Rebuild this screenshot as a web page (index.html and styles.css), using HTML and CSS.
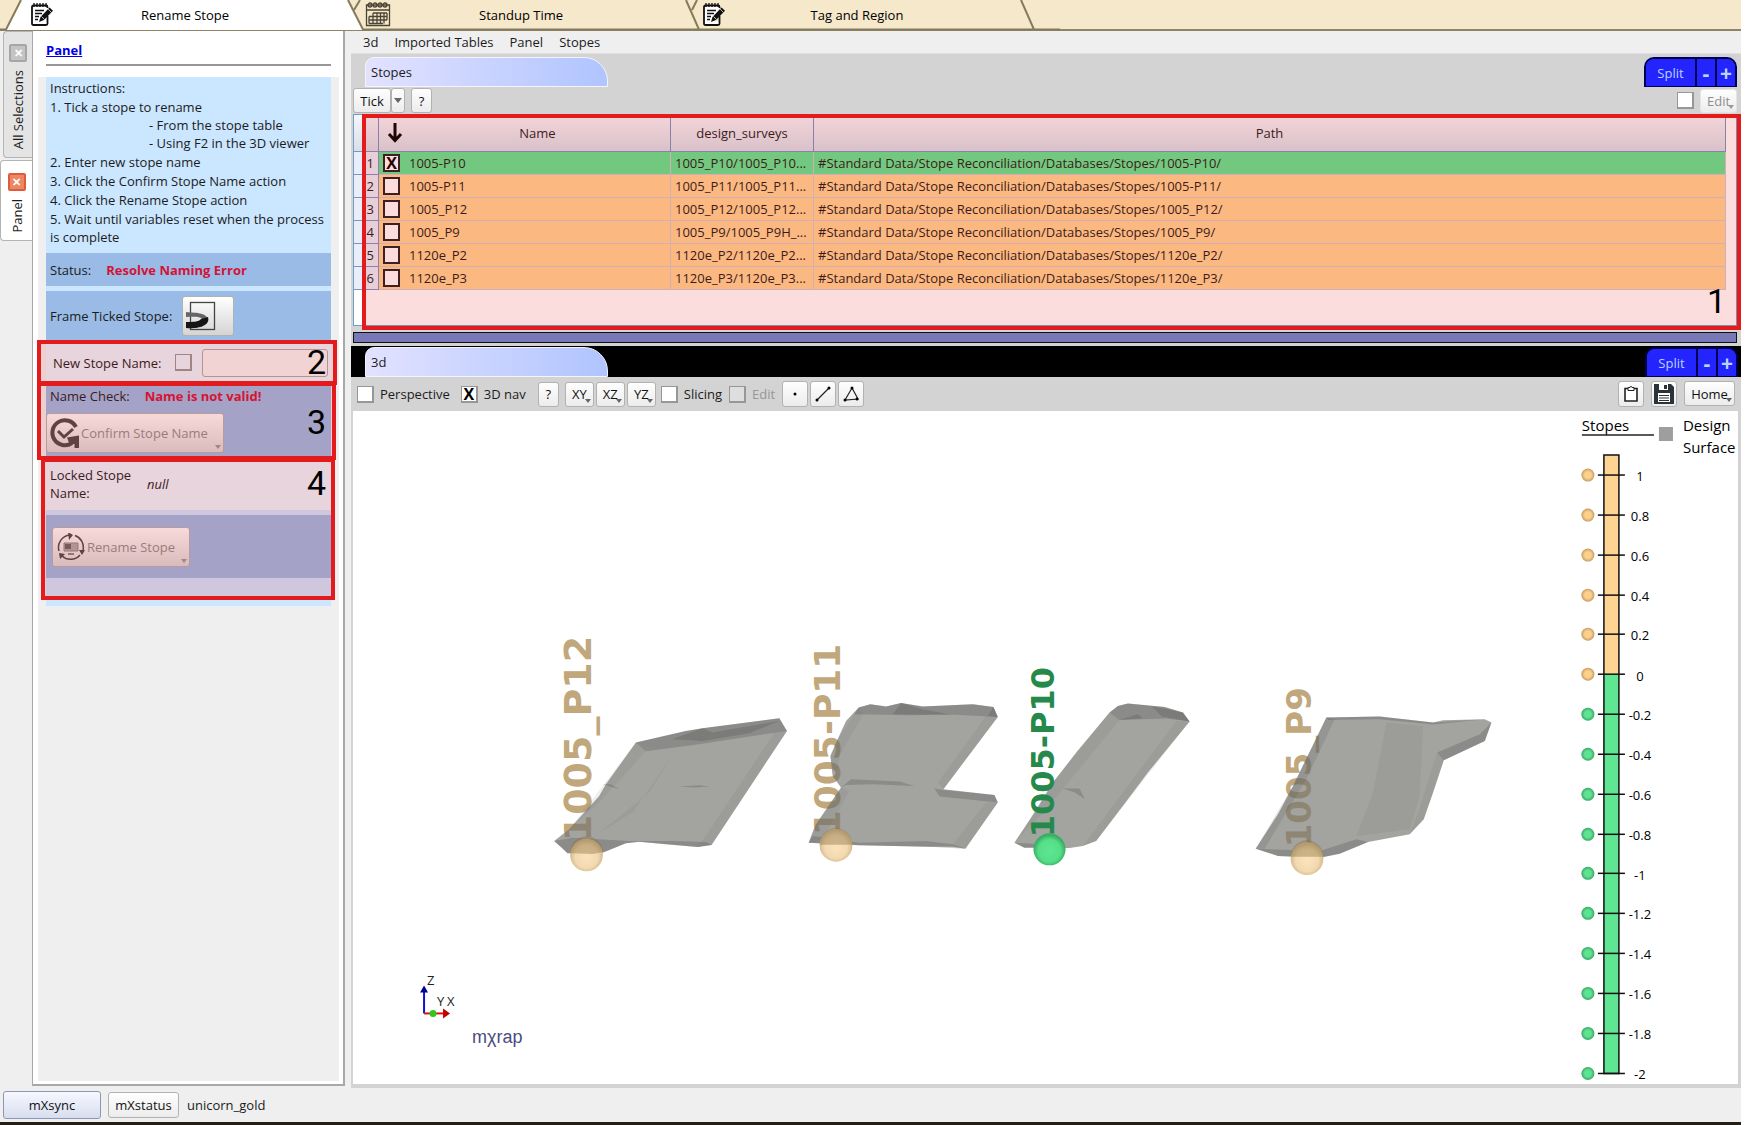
FILE: index.html
```html
<!DOCTYPE html>
<html lang="en">
<head>
<meta charset="utf-8">
<title>Rename Stope</title>
<link rel="stylesheet" href="styles.css">
</head>
<body>
<svg class="defs" aria-hidden="true">
  <defs>
    <symbol id="i-note" viewBox="0 0 26 26">
      <path d="M4 4h15v3l-4 5v8h4v4H3V4z" fill="#fff"/>
      <path d="M18.500 15v7.500q0 1.500-1.500 1.500H4.500Q3 24 3 22.500V6q0-1.500 1.500-1.500H17q1.500 0 1.500 1.500v1" fill="none" stroke="#111" stroke-width="1.800"/>
      <path d="M5 2v4M8 2v4M11 2v4M14 2v4M17 2v4" stroke="#111" stroke-width="1.300"/>
      <path d="M6 9.500h9M6 12.500h7M6 15.500h4M6 18.500h3" stroke="#111" stroke-width="1.300"/>
      <path d="M10 21l1.500-5L20.500 6.500l3.500 3.300L15 19z" fill="#111"/>
      <path d="M12.500 15.500l3 3M19 8l3.500 3.500" stroke="#fff" stroke-width=".7"/>
    </symbol>
    <symbol id="i-cal" viewBox="0 0 26 26">
      <g fill="none" stroke="#4a4536" stroke-width="1.300">
        <path d="M1.500 4h23v20.500h-23zM1.500 9h23"/>
        <path d="M8 12h14M4 15.500h18M4 19h18M4 22.500h14M4 15.500v7M8 12v10.500M12 12v10.500M15.500 12v10.500M19 12v10.500M22 12v7"/>
        <circle cx="5" cy="4" r="2"/><circle cx="10" cy="4" r="2"/><circle cx="15" cy="4" r="2"/><circle cx="20" cy="4" r="2"/>
      </g>
    </symbol>
    <radialGradient id="g-tan" cx=".5" cy=".55" r=".5"><stop offset="0" stop-color="#fbe3bd"/><stop offset=".7" stop-color="#f3d9b0"/><stop offset="1" stop-color="#d3b98e"/></radialGradient>
    <radialGradient id="g-green" cx=".5" cy=".55" r=".5"><stop offset="0" stop-color="#5ee591"/><stop offset=".7" stop-color="#55de88"/><stop offset="1" stop-color="#38ad63"/></radialGradient>
    <radialGradient id="g-dot-tan"><stop offset=".5" stop-color="#fdd08c"/><stop offset="1" stop-color="#c49d63"/></radialGradient>
    <radialGradient id="g-dot-green"><stop offset=".5" stop-color="#5fe291"/><stop offset="1" stop-color="#36a863"/></radialGradient>
    <g id="tick-tan"><circle cx="1588" cy="0" r="6.500" fill="url(#g-dot-tan)"/><path d="M1598 0h27" stroke="#111" stroke-width="1.500"/></g>
    <g id="tick-green"><circle cx="1588" cy="0" r="6.500" fill="url(#g-dot-green)"/><path d="M1598 0h27" stroke="#111" stroke-width="1.500"/></g>
  </defs>
</svg>
<div class="app">
  <nav class="suite-tabs">
    <svg class="suite-shape" width="1060" height="31" viewBox="0 0 1060 31" aria-hidden="true">
      <path d="M0 30L6 30 21 0H348L363 30z" fill="#fff"/>
      <g fill="none" stroke="#857a5c" stroke-width="2">
        <path d="M0 29.500H6L21 0M348 0L363 29.500H699L686 0M699 29.500H1034L1021 0M1034 29.500H1060"/>
        <path d="M360 0l-6 10M697 0l-5 10"/>
      </g>
    </svg>
    <a class="suite-tab" href="#rename"><svg class="suite-icon"><use href="#i-note"/></svg>Rename Stope</a>
    <a class="suite-tab" href="#standup"><svg class="suite-icon"><use href="#i-cal"/></svg>Standup Time</a>
    <a class="suite-tab" href="#tag"><svg class="suite-icon"><use href="#i-note"/></svg>Tag and Region</a>
  </nav>

  <main class="workspace">
    <div class="dock-tabs">
      <div class="dock-tab dock-tab-idle"><button class="close" aria-label="Close All Selections">✕</button><span class="dock-name">All Selections</span></div>
      <div class="dock-tab dock-tab-on"><button class="close close-hot" aria-label="Close Panel">✕</button><span class="dock-name">Panel</span></div>
    </div>

    <aside class="panel">
      <div class="panel-head"><a href="#panel">Panel</a></div>
      <div class="panel-body">
        <div class="form">
          <div class="instructions">
            <div>Instructions:</div>
            <div>1. Tick a stope to rename
              <div class="sub">- From the stope table</div>
              <div class="sub">- Using F2 in the 3D viewer</div>
            </div>
            <div>2. Enter new stope name</div>
            <div>3. Click the Confirm Stope Name action</div>
            <div>4. Click the Rename Stope action</div>
            <div>5. Wait until variables reset when the process is complete</div>
          </div>
          <div class="row row-status"><span>Status:</span><b class="error">Resolve Naming Error</b></div>
          <div class="row row-frame"><span>Frame Ticked Stope:</span>
            <button class="btn btn-frame" aria-label="Frame ticked stope">
              <svg width="36" height="34" viewBox="0 0 36 34"><rect x="6.500" y="3.500" width="24" height="27" fill="none" stroke="#444" stroke-width="1.300"/><path d="M2 13c8 1 21 0 22 8l-6-1C16 17 8 18 2 18z" fill="#666"/><path d="M2 23c6 0 13 0 15-3l7-2c3 10-13 12-22 11z" fill="#151515"/></svg>
            </button>
          </div>
          <div class="step step-name">
            <label for="use-name">New Stope Name:</label>
            <input class="check" type="checkbox" id="use-name">
            <input class="field" type="text" aria-label="New stope name">
            <div class="mark mark-2">2</div>
          </div>
          <div class="step step-check">
            <div class="check-line"><span>Name Check:</span><b class="error">Name is not valid!</b></div>
            <button class="btn btn-confirm" disabled>
              <svg width="32" height="32" viewBox="0 0 32 32"><path d="M27 10A12.500 12.500 0 1 0 23 26" fill="none" stroke="#494949" stroke-width="4"/><path d="M18 20.500l12-2v12.500h-4.500v-4h-5z" fill="#494949"/><path d="M9 14l6 6 9-8" fill="none" stroke="#494949" stroke-width="3"/></svg>
              Confirm Stope Name<i class="caret"></i>
            </button>
            <div class="mark mark-3">3</div>
          </div>
          <div class="step step-rename">
            <div class="locked"><span class="locked-label">Locked Stope Name:</span><i>null</i></div>
            <div class="rename-row">
              <button class="btn btn-rename" disabled>
                <svg width="28" height="28" viewBox="0 0 28 28"><g fill="none" stroke="#494949" stroke-width="1.500"><path d="M2 18A12.500 12.500 0 0 1 13 2M18 2.500A12.500 12.500 0 0 1 26 17M23 22A12.500 12.500 0 0 1 5 23"/></g><path d="M11 -1l5 3-4 5zM22 17h6l-3 5zM2 20l6 1-5 5z" fill="#494949"/><path d="M7 10h14v8H7z" fill="#aaa" stroke="#888"/><path d="M8 11h6v5H8z" fill="#666"/><path d="M11 21h6" stroke="#666" stroke-width="1.500"/></svg>
                Rename Stope<i class="caret"></i>
              </button>
            </div>
            <div class="mark mark-4">4</div>
          </div>
        </div>
      </div>
    </aside>

    <section class="content">
      <nav class="menu"><a href="#3d">3d</a><a href="#tables">Imported Tables</a><a href="#panel">Panel</a><a href="#stopes">Stopes</a></nav>

      <div class="pane">
        <div class="pane-bar">
          <h2 class="pane-tab">Stopes</h2>
          <div class="split"><button class="split-main">Split</button><button>-</button><button>+</button></div>
        </div>
        <div class="table-tools">
          <button class="btn btn-tick">Tick</button><button class="btn btn-drop" aria-label="Tick options"><i class="drop"></i></button><button class="btn btn-help">?</button>
          <input class="check edit-check" type="checkbox" aria-label="Enable edit"><button class="btn btn-edit" disabled>Edit<i class="caret"></i></button>
        </div>
        <div class="grid-frame">
          <table class="grid">
            <colgroup><col class="c-num"><col class="c-tick"><col class="c-name"><col class="c-survey"><col></colgroup>
            <thead><tr><th></th><th class="sort"><svg width="16" height="20" viewBox="0 0 16 20"><path d="M8 0v16M2 11l6 6.500 6-6.500" fill="none" stroke="#000" stroke-width="3"/></svg></th><th>Name</th><th>design_surveys</th><th>Path</th></tr></thead>
            <tbody>
              <tr class="on"><td>1</td><td><input class="check" type="checkbox" checked aria-label="1005-P10"></td><td>1005-P10</td><td>1005_P10/1005_P10...</td><td>#Standard Data/Stope Reconciliation/Databases/Stopes/1005-P10/</td></tr>
              <tr><td>2</td><td><input class="check" type="checkbox" aria-label="1005-P11"></td><td>1005-P11</td><td>1005_P11/1005_P11...</td><td>#Standard Data/Stope Reconciliation/Databases/Stopes/1005-P11/</td></tr>
              <tr><td>3</td><td><input class="check" type="checkbox" aria-label="1005_P12"></td><td>1005_P12</td><td>1005_P12/1005_P12...</td><td>#Standard Data/Stope Reconciliation/Databases/Stopes/1005_P12/</td></tr>
              <tr><td>4</td><td><input class="check" type="checkbox" aria-label="1005_P9"></td><td>1005_P9</td><td>1005_P9/1005_P9H_...</td><td>#Standard Data/Stope Reconciliation/Databases/Stopes/1005_P9/</td></tr>
              <tr><td>5</td><td><input class="check" type="checkbox" aria-label="1120e_P2"></td><td>1120e_P2</td><td>1120e_P2/1120e_P2...</td><td>#Standard Data/Stope Reconciliation/Databases/Stopes/1120e_P2/</td></tr>
              <tr><td>6</td><td><input class="check" type="checkbox" aria-label="1120e_P3"></td><td>1120e_P3</td><td>1120e_P3/1120e_P3...</td><td>#Standard Data/Stope Reconciliation/Databases/Stopes/1120e_P3/</td></tr>
            </tbody>
          </table>
          <div class="mark mark-1">1</div>
        </div>
        <div class="splitter"></div>
      </div>

      <div class="pane-bar pane-bar-black">
        <h2 class="pane-tab">3d</h2>
        <div class="split"><button class="split-main">Split</button><button>-</button><button>+</button></div>
      </div>
      <div class="view-tools">
        <label class="opt"><input class="check" type="checkbox">Perspective</label>
        <label class="opt opt-nav"><input class="check" type="checkbox" checked>3D nav</label>
        <div class="axis-buttons">
          <button class="btn btn-help">?</button>
          <button class="btn btn-axis">XY<i class="caret"></i></button><button class="btn btn-axis">XZ<i class="caret"></i></button><button class="btn btn-axis">YZ<i class="caret"></i></button>
        </div>
        <label class="opt"><input class="check" type="checkbox">Slicing</label>
        <label class="opt opt-off"><input class="check" type="checkbox" disabled>Edit</label>
        <div class="draw-buttons">
          <button class="btn btn-icon" aria-label="Point"><svg width="16" height="18"><circle cx="8" cy="9" r="1.500"/></svg></button>
          <button class="btn btn-icon" aria-label="Line"><svg width="16" height="18"><path d="M2 15L14 3" stroke="#222" stroke-width="1.200"/><circle cx="2" cy="15" r="1.500"/><circle cx="14" cy="3" r="1.500"/></svg></button>
          <button class="btn btn-icon" aria-label="Polygon"><svg width="16" height="18"><path d="M9 3L2 15l13-1z" fill="none" stroke="#222" stroke-width="1.200"/><circle cx="9" cy="3" r="1.500"/><circle cx="2" cy="15" r="1.500"/><circle cx="14" cy="14" r="1.500"/></svg></button>
        </div>
        <div class="file-buttons">
          <button class="btn btn-icon" aria-label="Clipboard"><svg width="14" height="18" viewBox="0 0 14 18"><path d="M1 3.500h12v12.500H1z" fill="#fff" stroke="#222" stroke-width="1.600"/><path d="M4 5.500v-3h2a1 1 0 0 1 2 0h2v3z" fill="#fff" stroke="#222"/></svg></button>
          <button class="btn btn-icon" aria-label="Save"><svg width="20" height="20" viewBox="0 0 20 20"><path d="M0 0h17l3 3v17H0z" fill="#2b3338"/><path d="M5 0h9v6H5zM4 9h12v9H4z" fill="#fff"/><path d="M10 1h3v4h-3z" fill="#2b3338"/><path d="M5 11.500h10M5 14h10M5 16.500h10" stroke="#2b3338"/></svg></button>
          <button class="btn btn-home">Home<i class="caret"></i></button>
        </div>
      </div>
      <div class="viewport">
        <svg class="scene" viewBox="354 412 1384 672" role="img" aria-label="3D view of stopes">
          <g class="label-3d">
            <text transform="translate(592 842) rotate(-90)" font-size="38">1005_P12</text>
            <text transform="translate(841 836) rotate(-90)" font-size="36">1005-P11</text>
            <text transform="translate(1311 848) rotate(-90)" font-size="34">1005_P9</text>
          </g>
          <g transform="translate(540 540) scale(.33333)">
            <g class="rock">
              <path d="M45 905L90 870 180 770 200 735 290 610 440 575 490 567 600 553 720 537 743 575 517 917 475 923 380 915 300 907 260 912 190 940 85 942 68 925z"/>
              <path d="M808 910L828 858 905 745 880 710 873 650 895 600 920 545 958 505 993 495 1040 502 1085 491 1150 502 1300 495 1362 503 1375 533 1212 750 1365 767 1375 790 1278 928 1240 922 1170 922 960 918z"/>
            </g>
            <g class="shade">
              <path d="M290 610L440 575 490 567 600 553 720 537 743 575 640 590 480 615 320 636z"/>
              <path d="M400 600L490 567 520 580 720 545 630 582 490 605z"/>
              <path d="M45 905L100 895 270 905 400 905 500 908 517 917 475 923 300 907 260 912 190 940 85 942z"/>
              <path d="M420 742l60-4 30 4-45 3zM190 735l25 0 25 15z"/>
              <path d="M958 505L993 495 1040 502 1085 491 1150 502 1300 495 1362 503 1375 533 1220 525 1120 528 945 525z"/>
              <path d="M1060 525L1085 491 1150 510 1240 527zM1345 530L1362 503 1375 533z"/>
              <path d="M905 745L935 720 1080 727 1125 740 1000 735 920 737zM1185 748L1212 752 1365 767 1375 790 1200 772z"/>
              <path d="M808 910L820 890 960 910 1160 905 1240 915 1278 928 1170 922 960 918z"/>
            </g>
            <g class="shade-soft">
              <path d="M743 575L517 917 475 923 500 890 705 580z"/>
              <path d="M290 610L320 636 180 790 90 870z"/>
              <path d="M400 650L280 820 180 880 330 760z"/>
              <path d="M1375 533L1212 750 1195 730 1340 530zM1375 790L1278 928 1240 915 1340 790z"/>
              <path d="M958 505L970 528 900 650 890 720 873 650 895 600z"/>
              <path d="M905 745L930 755 850 900 808 910 828 858z"/>
            </g>
            <circle cx="142" cy="947" r="49" fill="url(#g-tan)"/>
            <path d="M93 942a49 49 0 0 1 98 -4l-30 6z" class="sunk"/>
            <circle cx="890" cy="918" r="49" fill="url(#g-tan)"/>
            <path d="M841 916a49 49 0 0 1 98 0z" class="sunk"/>
          </g>
          <g transform="translate(1000 580) scale(.33333)">
            <g class="rock">
              <path d="M45 790L75 745 105 700 160 610 230 520 330 400 355 380 385 373 495 383 550 400 570 427 445 580 385 660 290 785 250 800 210 806 75 805z"/>
              <path d="M768 808L835 705 880 620 980 415 1140 412 1300 430 1330 423 1455 420 1475 430 1455 485 1332 543 1300 640 1272 720 1230 765 1105 788 1020 823 960 835 835 830z"/>
            </g>
            <g class="shade">
              <path d="M330 400L355 380 385 373 495 383 550 400 570 427 500 418 360 422z"/>
              <path d="M360 422l55-17 15 12zM487 412l-30-30 93 18 20 27zM190 628l50 0 16 32-30-20z"/>
              <path d="M45 790L120 795 200 800 75 805z"/>
              <path d="M980 415L1140 412 1300 430 1455 420 1300 436 1140 420 985 422z"/>
              <path d="M768 808L960 815 1070 780 1105 788 1020 823 960 835 835 830z"/>
              <path d="M1475 430L1455 485 1332 543 1312 520 1440 465z"/>
            </g>
            <g class="shade-soft">
              <path d="M330 400L360 422 140 690 45 790 160 610z"/>
              <path d="M570 427L290 785 250 800 530 425z"/>
              <path d="M980 415L1005 420 920 600 795 808 768 808 880 620z"/>
              <path d="M980 415L1005 420 920 600 795 808 768 808 880 620z"/>
              <path d="M1312 520L1332 543 1272 720 1230 765 1255 700z"/>
              <path d="M1160 430L1120 640 1070 770 1230 750 1260 650 1270 440z"/>
            </g>
            <circle cx="922" cy="838" r="49" fill="url(#g-tan)"/>
            <path d="M873 832a49 49 0 0 1 98 0z" class="sunk"/>
          </g>
          <text class="label-3d label-green" transform="translate(1054 838) rotate(-90)" font-size="32">1005-P10</text>
          <circle cx="1050" cy="850" r="16" fill="url(#g-green)"/>

          <g>
            <path d="M425 1014V990" stroke="#1010d8" stroke-width="2"/><path d="M421 993l4-7 4 7z" fill="#000090"/>
            <path d="M425 1014h20" stroke="#e01010" stroke-width="2"/><path d="M444 1009l7 5-7 5z" fill="#c00000"/>
            <circle cx="434" cy="1014" r="3.500" fill="#30c818"/>
            <text x="428" y="986" class="axis">Z</text><text x="438" y="1007" class="axis">Y</text><text x="448" y="1007" class="axis">X</text>
            <text x="473" y="1044" class="brand">mχrap</text>
          </g>

          <g class="legend">
            <text x="1582" y="432" class="legend-title">Stopes</text>
            <path d="M1582 436h72" stroke="#222" stroke-width="1.500"/>
            <rect x="1659" y="428" width="14" height="14" fill="#9e9e9e"/>
            <text x="1683" y="432" class="legend-title">Design</text><text x="1683" y="454" class="legend-title">Surface</text>
            <path d="M1604 456h15v219h-15z" fill="#fed493"/><path d="M1604 675h15v399h-15z" fill="#60e592"/>
            <path d="M1604 456h15v618h-15z" fill="none" stroke="#111" stroke-width="1.500"/>
            <use href="#tick-tan" y="476"/><use href="#tick-tan" y="516"/><use href="#tick-tan" y="556"/><use href="#tick-tan" y="596"/><use href="#tick-tan" y="635"/><use href="#tick-tan" y="675"/>
            <use href="#tick-green" y="715"/><use href="#tick-green" y="755"/><use href="#tick-green" y="795"/><use href="#tick-green" y="835"/><use href="#tick-green" y="874"/><use href="#tick-green" y="914"/><use href="#tick-green" y="954"/><use href="#tick-green" y="994"/><use href="#tick-green" y="1034"/><use href="#tick-green" y="1074"/>
            <g class="ticks"><text x="1640" y="482">1</text><text x="1640" y="522">0.8</text><text x="1640" y="562">0.6</text><text x="1640" y="602">0.4</text><text x="1640" y="641">0.2</text><text x="1640" y="682">0</text><text x="1640" y="721">-0.2</text><text x="1640" y="761">-0.4</text><text x="1640" y="801">-0.6</text><text x="1640" y="841">-0.8</text><text x="1640" y="881">-1</text><text x="1640" y="920">-1.2</text><text x="1640" y="960">-1.4</text><text x="1640" y="1000">-1.6</text><text x="1640" y="1040">-1.8</text><text x="1640" y="1080">-2</text></g>
          </g>
        </svg>
      </div>
    </section>
  </main>

  <footer class="status-bar"><button class="btn btn-sync">mXsync</button><button class="btn btn-status">mXstatus</button><span>unicorn_gold</span></footer>
</div>
</body>
</html>
```
FILE: styles.css
```css
* { box-sizing: border-box; }
body {
  margin: 0;
  background: #fff;
  color: #1c1c1c;
  font: 13px/18px "Open Sans", "Noto Sans", sans-serif;
}
button, input { font: inherit; color: inherit; margin: 0; padding: 0; }
a { color: inherit; text-decoration: none; }
.defs { position: absolute; width: 0; height: 0; }
.app {
  display: flex;
  flex-direction: column;
  min-height: 100vh;
  margin-right: 9px;
  background: #efefef;
  border-bottom: 3px solid #241e14;
}

/* suite tabs */
.suite-tabs {
  position: relative;
  display: flex;
  height: 31px;
  padding-left: 17px;
  background: #f6e8cb;
  border-bottom: 2px solid #8e8467;
}
.suite-shape { position: absolute; left: 0; top: 0; }
.suite-tab {
  position: relative;
  width: 336px;
  padding-top: 6px;
  text-align: center;
  color: #000;
}
.suite-icon { position: absolute; left: 12px; top: 1px; width: 26px; height: 26px; }

.workspace { flex: 1; display: flex; min-height: 0; }

/* side dock */
.dock-tabs { width: 32px; display: flex; flex-direction: column; align-items: flex-end; gap: 2px; }
.dock-tab {
  display: flex;
  flex-direction: column;
  align-items: center;
  gap: 8px;
  width: 29px;
  padding-top: 12px;
  border: 1px solid #b4b4b4;
  border-right: 0;
  border-radius: 4px 0 0 4px;
}
.dock-tab-idle { height: 127px; background: #e4e4e4; }
.dock-tab-on { height: 81px; width: 32px; background: #fff; }
.dock-name { writing-mode: vertical-rl; transform: rotate(180deg); line-height: 18px; }
.close {
  width: 18px;
  height: 18px;
  border: 2px solid #a6a6a6;
  border-radius: 2px;
  background: #c4c4c4;
  color: #fff;
  font-size: 11px;
  line-height: 14px;
  font-weight: 700;
}
.close-hot { background: #ec8762; border-color: #de5a40; }

.panel {
  width: 313px;
  margin-bottom: 2px;
  padding: 0 4px 3px 5px;
  background: #fff;
  border: solid #a8a8a8;
  border-width: 0 2px 2px 1px;
  display: flex;
  flex-direction: column;
}
.panel-head { margin: 0 8px; height: 35px; padding-top: 10px; border-bottom: 2px solid #979797; }
.panel-head a { color: #0000e6; font-weight: 700; text-decoration: underline; }
.panel-body { flex: 1; margin-top: 11px; background: #efefef; padding: 0 8px; }
.form { background: #cbe6ff; padding-bottom: 6px; }
.instructions { display: flex; flex-direction: column; gap: 1px; height: 176px; padding: 2px 3px 0 4px; }
.sub { padding-left: 99px; }
.row { display: flex; align-items: center; background: #99bbe6; padding-left: 4px; }
.row-status { height: 33px; gap: 15px; margin-bottom: 5px; }
.row-frame { height: 49px; gap: 10px; }
.error { color: #d41237; }
.btn {
  position: relative;
  border: 1px solid #b2b2b2;
  border-radius: 3px;
  background: linear-gradient(#fefefe, #ececec);
  color: #111;
  white-space: nowrap;
}
.btn:disabled { color: #8e8e8e; }
.btn-frame { width: 52px; height: 40px; background: linear-gradient(#fff, #d4d4d4); text-align: left; }
.btn-frame svg { display: block; margin-left: 1px; }
.caret, .drop {
  display: block;
  width: 0;
  height: 0;
  border: 3px solid transparent;
  border-top: 4px solid #666;
  border-bottom: 0;
}
.caret { position: absolute; right: 2px; bottom: 3px; }
.btn:disabled .caret { border-top-color: #999; }
.drop { border-width: 5px 4px 0; margin: 0 auto; }

/* numbered steps */
.step { position: relative; }
.step-name { display: flex; align-items: center; height: 45px; padding: 0 3px 0 7px; background: #e8f5ff; }
.step-name label { width: 122px; }
.field { flex: 1; min-width: 0; margin-left: 10px; height: 28px; border: 1px solid #aaa; border-radius: 3px; background: #f4f4f4; }
.step-check { height: 73px; padding: 2px 0 0 0; background: #99bbe6; }
.check-line { display: flex; gap: 15px; height: 26px; padding-left: 4px; }
.btn-confirm, .btn-rename { display: flex; align-items: center; height: 40px; background: linear-gradient(#fbfbfb, #d8d8d8); }
.btn-confirm { width: 178px; padding-left: 2px; }
.step-rename { height: 142px; background: #cbe6ff; }
.locked { display: flex; align-items: center; gap: 15px; height: 52px; padding-left: 4px; background: #e8f5ff; }
.locked-label { width: 82px; }
.rename-row { margin-top: 5px; height: 63px; padding: 12px 6px; background: #99bbe6; }
.btn-rename { width: 138px; padding-left: 4px; gap: 2px; }
.mark {
  position: absolute;
  border: 4px solid #e31b1d;
  background: rgba(227, 27, 29, .15);
  color: #000;
  font: 34px/36px Roboto, sans-serif;
  text-align: right;
  pointer-events: none;
}
.mark-2 { inset: 0 -6px 0 -9px; padding-right: 7px; }
.mark-3 { inset: -3px -5px -2px -9px; padding: 18px 6px 0 0; }
.mark-4 { inset: 0 -4px 0 -5px; padding: 3px 5px 0 0; }
.mark-1 { inset: -1px -5px -5px 8px; padding: 0 11px 7px 0; display: flex; align-items: flex-end; justify-content: flex-end; }

.check {
  appearance: none;
  flex: none;
  display: grid;
  place-items: center;
  width: 17px;
  height: 17px;
  border: 2px solid #979797;
  border-width: 1px 2px 2px 1px;
  background: #fff;
}
.check:checked::before { content: "X"; color: #000; font: 700 16px/14px "Open Sans", sans-serif; }
.check:disabled { background: #dedede; }
.step-name .check { background: transparent; }

/* content */
.content { flex: 1; min-width: 0; display: flex; flex-direction: column; padding-left: 6px; }
.menu { display: flex; gap: 16px; height: 23px; padding: 2px 12px; border-bottom: 1px solid #e0e0e0; }
.pane { background: #d3d3d3; padding: 0 4px 3px 2px; }
.pane-bar { display: flex; justify-content: space-between; align-items: flex-end; height: 33px; padding-left: 12px; }
.pane-tab {
  margin: 0;
  width: 243px;
  height: 30px;
  padding: 5px 5px;
  border: 1px solid #f4f4ff;
  border-radius: 9px 24px 0 0;
  background: linear-gradient(90deg, #e2e2ff, #b0c4ff);
  font-size: 13px;
  line-height: 18px;
  font-weight: 400;
}
.pane-bar-black { height: 31px; padding: 0 3px 0 14px; background: #000; }
.split { display: flex; width: 93px; height: 30px; border: 2px solid #000050; border-bottom-width: 1px; border-radius: 10px 10px 0 0; overflow: hidden; background: #2424ff; }
.split button { width: 20px; border: 0; border-left: 2px solid #000050; background: #2424ff; color: #b8d4ff; font-size: 21px; line-height: 26px; font-weight: 700; }
.split .split-main { flex: 1; border: 0; font-size: 13px; font-weight: 400; }
.table-tools { display: flex; align-items: center; height: 27px; }
.btn-tick { width: 38px; height: 25px; }
.btn-drop { width: 14px; height: 25px; }
.btn-help { width: 21px; height: 25px; }
.table-tools .btn-help { margin-left: 6px; }
.edit-check { margin-left: auto; margin-right: 6px; }
.btn-edit { width: 37px; height: 24px; border-color: #e4e4e4; }

.grid-frame { position: relative; border: 1px solid #6f9fc8; background: #fff; padding: 0 10px 35px 0; margin-bottom: 6px; }
.grid { width: 100%; table-layout: fixed; border-collapse: separate; border-spacing: 0; }
.c-num { width: 25px; }
.c-tick { width: 26px; }
.c-name { width: 266px; }
.c-survey { width: 143px; }
.grid th {
  height: 37px;
  padding: 0;
  font-weight: 400;
  background: linear-gradient(#f6f6fa, #d8dfe8);
  border-right: 1px solid #7b93c4;
  border-bottom: 1px solid #7b93c4;
}
.grid th.sort { border-right: 0; }
.sort svg { display: block; margin: 0 0 0 8px; }
.grid td {
  height: 23px;
  padding: 0 4px;
  line-height: 18px;
  background: #ffd593;
  border-right: 1px solid #cfc8d0;
  border-bottom: 1px solid #cfc8d0;
  white-space: nowrap;
  overflow: hidden;
}
.grid td:first-child { background: #e9eefa; border-color: #7b93c4; text-align: right; }
.grid td:nth-child(2) { border-right: 0; }
.grid .on td:not(:first-child) { background: #60e792; }
.grid .check { border: 2px solid #222; height: 18px; }
.splitter { height: 11px; border: 1px solid #111; background: #7878b9; }

.view-tools { display: flex; align-items: center; height: 34px; padding: 0 6px; background: #d3d3d3; }
.opt { display: flex; align-items: center; gap: 6px; margin-right: 7px; white-space: nowrap; }
.opt-nav { margin-left: 4px; }
.opt-off { color: #979797; }
.axis-buttons, .draw-buttons, .file-buttons { display: flex; gap: 2px; }
.axis-buttons { margin: 0 5px; }
.axis-buttons .btn-help { margin-right: 4px; }
.btn-axis { width: 29px; height: 25px; }
.btn-icon { display: grid; place-items: center; width: 26px; height: 26px; }
.file-buttons { margin-left: auto; gap: 7px; }
.btn-home { width: 51px; height: 25px; }
.viewport { flex: 1; min-height: 0; background: #fff; border: solid #d3d3d3; border-width: 0 3px 4px 2px; }
.scene { display: block; width: 100%; height: auto; }

.label-3d { font-family: "DejaVu Sans", sans-serif; font-weight: 700; fill: #c0a77c; }
.label-green { fill: #26894c; }
.rock { fill: #74736f; fill-opacity: .66; }
.shade { fill: #555; fill-opacity: .3; }
.shade-soft { fill: #555; fill-opacity: .09; }
.sunk { fill: #8a7040; fill-opacity: .4; }
.axis { font-size: 13px; fill: #222; }
.brand { font: 18px "Liberation Sans", sans-serif; fill: #4b4b80; }
.legend-title { font-size: 15px; }
.ticks { font-size: 13px; text-anchor: middle; }

.status-bar { display: flex; align-items: center; height: 34px; padding-left: 3px; }
.btn-sync { width: 98px; height: 28px; border-color: #8d97b4; background: linear-gradient(#f6f8ff, #d8def0); }
.btn-status { width: 71px; height: 26px; margin: 0 8px 0 7px; }
```
